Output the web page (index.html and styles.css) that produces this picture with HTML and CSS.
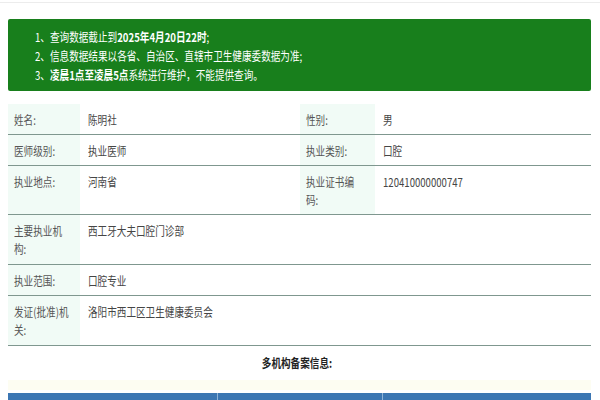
FILE: index.html
```html
<!DOCTYPE html>
<html lang="zh">
<head>
<meta charset="utf-8">
<link rel="stylesheet" href="styles.css">
</head>
<body>
<div class="topline"></div>
<div class="notice">
  <p class="t">1、查询数据截止到<b>2025年4月20日22时</b>;</p>
  <p class="t">2、信息数据结果以各省、自治区、直辖市卫生健康委数据为准;</p>
  <p class="t">3、<b>凌晨1点至凌晨5点</b>系统进行维护，不能提供查询。</p>
</div>
<table class="info">
  <colgroup>
    <col class="c1"><col class="c2"><col class="c3"><col class="c4">
  </colgroup>
  <tr><td class="lbl"><span class="t">姓名:</span></td><td><span class="t">陈明社</span></td><td class="lbl lbl2"><span class="t">性别:</span></td><td><span class="t">男</span></td></tr>
  <tr><td class="lbl"><span class="t">医师级别:</span></td><td><span class="t">执业医师</span></td><td class="lbl lbl2"><span class="t">执业类别:</span></td><td><span class="t">口腔</span></td></tr>
  <tr><td class="lbl"><span class="t">执业地点:</span></td><td><span class="t">河南省</span></td><td class="lbl lbl2"><span class="t">执业证书编码:</span></td><td><span class="t">120410000000747</span></td></tr>
  <tr class="tall"><td class="lbl"><span class="t">主要执业机构:</span></td><td colspan="3"><span class="t">西工牙大夫口腔门诊部</span></td></tr>
  <tr><td class="lbl"><span class="t">执业范围:</span></td><td colspan="3"><span class="t">口腔专业</span></td></tr>
  <tr class="tall"><td class="lbl"><span class="t">发证(批准)机关:</span></td><td colspan="3"><span class="t">洛阳市西工区卫生健康委员会</span></td></tr>
</table>
<div class="multi"><span class="mt">多机构备案信息:</span></div>
<div class="cream"></div>
<div class="bluebar"><span class="b1"></span><span class="b2"></span><span class="b3"></span></div>
</body>
</html>
```
FILE: styles.css
```css
html, body {
  margin: 0;
  padding: 0;
  background: #fff;
  font-family: "Microsoft YaHei", "Noto Sans CJK SC", "Noto Sans", sans-serif;
  overflow: hidden;
}
/* the source text is rendered horizontally condensed */
.t {
  display: block;
  width: 125%;
  transform: scaleX(0.8);
  transform-origin: 0 0;
}
.topline {
  height: 1px;
  margin-top: 2px;
  background: #ececec;
}
.notice {
  margin: 16px 9px 0 8px;
  height: 72px;
  box-sizing: border-box;
  background: #187f1c;
  border-radius: 2px;
  color: #fff;
  font-size: 12px;
  line-height: 19px;
  padding: 8px 0 0 27px;
}
.notice p {
  margin: 0;
  white-space: nowrap;
}
.info {
  margin: 13px 9px 0 8px;
  width: 583px;
  border-collapse: collapse;
  table-layout: fixed;
  font-size: 12px;
  line-height: 18px;
  color: #454545;
}
.c1 { width: 72px; }
.c2 { width: 220px; }
.c3 { width: 75px; }
.c4 { width: 216px; }
.info td {
  padding: 7px 6px 5px 8px;
  vertical-align: top;
  border-bottom: 1px solid #7f978f;
}
.info tr.tall td {
  padding-bottom: 6px;
}
.info td.lbl {
  background: #f1fbf6;
  padding-left: 6px;
  padding-right: 10px;
  color: #555;
}
.info td.lbl2 {
  padding-right: 13px;
}
.multi {
  text-align: center;
  font-size: 12px;
  font-weight: bold;
  color: #222;
  margin-top: 8px;
  line-height: 18px;
  padding-right: 6px;
}
.mt {
  display: inline-block;
  transform: scaleX(0.8);
}
.cream {
  margin: 8px 9px 0 8px;
  height: 10px;
  background: #fdfdf2;
}
.bluebar {
  margin: 3px 9px 0 8px;
  height: 10px;
  background: #3b76b3;
  display: flex;
}
.bluebar span { display: block; height: 100%; }
.b1 { width: 209px; border-right: 1px solid #8fb3d8; }
.b2 { width: 164px; border-right: 1px solid #8fb3d8; }
```
